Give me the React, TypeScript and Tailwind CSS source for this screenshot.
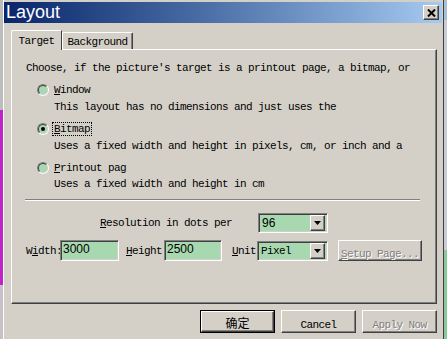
import type { ReactNode } from "react";

const mono = "font-['Liberation_Mono','DejaVu_Sans_Mono',monospace] text-[11px] tracking-[-0.6px] leading-[12px]";
const sans = "font-['Liberation_Sans',Arial,sans-serif]";

const raised = "border border-t-white border-l-white border-b-[#404040] border-r-[#404040] shadow-[inset_-1px_-1px_0_#808080]";
const sunken = "border border-t-[#808080] border-l-[#808080] border-b-white border-r-white shadow-[inset_1px_1px_0_#404040,inset_-1px_-1px_0_#d4d0c8]";
const disabledText = "text-[#808080] [text-shadow:1px_1px_0_#ffffff]";

function Radio({ checked }: { checked?: boolean }) {
  return (
    <div className="w-[12px] h-[12px] shrink-0 rounded-full border border-t-[#808080] border-l-[#808080] border-b-white border-r-white">
      <div className="w-full h-full rounded-full border border-t-[#404040] border-l-[#404040] border-b-[#d4d0c8] border-r-[#d4d0c8] bg-[#a8d8b0] flex items-center justify-center">
        {checked && <div className="w-[4px] h-[4px] rounded-full bg-black" />}
      </div>
    </div>
  );
}

function Arrow() {
  return (
    <div className={`w-[15px] h-[16px] bg-[#d4d0c8] flex items-center justify-center ${raised}`}>
      <svg width="7" height="4" viewBox="0 0 7 4">
        <path d="M0 0h7L3.5 4z" fill="#000" />
      </svg>
    </div>
  );
}

function Combo({ value, w, monoText }: { value: string; w: string; monoText?: boolean }) {
  return (
    <div className={`${w} h-[20px] bg-[#a8d8b0] flex items-center justify-between pl-[3px] pr-[2px] ${sunken}`}>
      <span className={monoText ? mono : `${sans} text-[12px] leading-[14px]`}>{value}</span>
      <Arrow />
    </div>
  );
}

function Field({ value, w }: { value: string; w: string }) {
  return (
    <div className={`${w} h-[21px] bg-[#a8d8b0] flex items-center pl-[2px] pb-[3px] ${sunken}`}>
      <span className={`${sans} text-[12px] leading-[14px]`}>{value}</span>
    </div>
  );
}

function Btn({ children, w, h, def, disabled }: { children: ReactNode; w: string; h: string; def?: boolean; disabled?: boolean }) {
  const inner = (
    <div className={`w-full h-full bg-[#d4d0c8] flex items-center justify-center ${raised}`}>
      <span className={disabled ? disabledText : ""}>{children}</span>
    </div>
  );
  return def ? <div className={`${w} ${h} border border-black`}>{inner}</div> : <div className={`${w} ${h}`}>{inner}</div>;
}

export default function App() {
  return (
    <div className="w-[447px] h-[339px] flex overflow-hidden bg-[#d4d0c8] text-black">
      <div className="w-[3px] flex flex-col">
        <div className="h-[110px] bg-[#bcbcbc]" />
        <div className="h-[175px] bg-[#c024c8]" />
        <div className="flex-1 bg-[#c8c0c8]" />
      </div>

      <div className="w-[441px] flex flex-col bg-[#d4d0c8] border-l border-r border-l-white border-r-[#404040] pt-[2px] pr-[1px]">
        <div className="h-[21px] flex items-start justify-between bg-gradient-to-r from-[#0a246a] to-[#a6caf0]">
          <span className={`${sans} text-[18px] leading-[21px] text-white pl-[2px]`}>Layout</span>
          <div className={`w-[16px] h-[15px] mt-[3px] mr-[3px] bg-[#d4d0c8] flex items-center justify-center ${raised}`}>
            <svg width="9" height="8" viewBox="0 0 9 8">
              <path d="M1 0.5l7 7M8 0.5l-7 7" stroke="#000" strokeWidth="2" />
            </svg>
          </div>
        </div>

        <div className="ml-[7px] mr-[5px] mt-[7px] flex flex-col">
          <div className="flex items-end h-[19px]">
            <div className={`relative z-10 -mb-px h-[20px] w-[51px] bg-[#d4d0c8] border-t border-l border-r border-t-white border-l-white border-r-[#404040] rounded-tl-[2px] flex items-center justify-center ${mono}`}>
              Target
            </div>
            <div className={`h-[17px] w-[71px] border-t border-l border-r border-t-white border-l-white border-r-[#404040] rounded-tr-[2px] shadow-[inset_-1px_0_0_#808080] flex items-center justify-center pt-px ${mono}`}>
              Background
            </div>
          </div>

          <div className="h-[255px] flex flex-col pl-[14px] border border-t-white border-l-white border-b-[#404040] border-r-[#404040] shadow-[inset_-1px_-1px_0_#808080]">
            <div className={`mt-[12px] h-[12px] whitespace-nowrap ${mono}`}>Choose, if the picture's target is a printout page, a bitmap, or</div>

            <div className="flex items-center h-[14px] ml-[11px] mt-[9px]">
              <Radio />
              <span className={`ml-[3px] px-px h-[14px] border border-transparent ${mono}`}>
                <u>W</u>indow
              </span>
            </div>
            <div className={`ml-[28px] mt-[4px] h-[12px] ${mono}`}>This layout has no dimensions and just uses the</div>

            <div className="flex items-center h-[14px] ml-[11px] mt-[9px]">
              <Radio checked />
              <span className={`ml-[3px] px-px h-[14px] border border-dotted border-black ${mono}`}>
                <u>B</u>itmap
              </span>
            </div>
            <div className={`ml-[28px] mt-[4px] h-[12px] whitespace-nowrap ${mono}`}>Uses a fixed width and height in pixels, cm, or inch and a</div>

            <div className="flex items-center h-[14px] ml-[11px] mt-[9px]">
              <Radio />
              <span className={`ml-[3px] px-px h-[14px] border border-transparent ${mono}`}>
                <u>P</u>rintout pag
              </span>
            </div>
            <div className={`ml-[28px] mt-[3px] h-[12px] ${mono}`}>Uses a fixed width and height in cm</div>

            <div className="mt-[9px] ml-[-1px] w-[395px] h-[2px] border-t border-b border-t-[#808080] border-b-white" />

            <div className="mt-[12px] h-[20px] flex items-center">
              <span className={`ml-[74px] w-[158px] ${mono}`}>
                <u>R</u>esolution in dots per
              </span>
              <Combo value="96" w="w-[70px]" />
            </div>

            <div className="mt-[7px] h-[21px] flex items-center">
              <span className={`w-[34px] whitespace-nowrap ${mono}`}>
                W<u>i</u>dth:
              </span>
              <Field value="3000" w="w-[59px]" />
              <span className={`ml-[7px] w-[38px] ${mono}`}>
                <u>H</u>eight
              </span>
              <Field value="2500" w="w-[58px]" />
              <span className={`ml-[10px] w-[25px] ${mono}`}>
                <u>U</u>nit
              </span>
              <Combo value="Pixel" w="w-[71px]" monoText />
              <div className="ml-[10px]">
                <Btn w="w-[84px]" h="h-[21px]" disabled>
                  <span className={mono}>
                    <u>S</u>etup Page...
                  </span>
                </Btn>
              </div>
            </div>
          </div>

          <div className="mt-[6px] flex justify-end gap-[6px]">
            <Btn w="w-[75px]" h="h-[23px]" def>
              <span className="font-['Noto_Sans_CJK_SC',sans-serif] text-[12px] leading-[14px]">确定</span>
            </Btn>
            <Btn w="w-[75px]" h="h-[23px]">
              <span className={mono}>Cancel</span>
            </Btn>
            <Btn w="w-[75px]" h="h-[23px]" disabled>
              <span className={mono}>Apply Now</span>
            </Btn>
          </div>
        </div>
      </div>

      <div className="w-[3px] flex flex-col">
        <div className="h-[20px] bg-[#a6c0dc]" />
        <div className="h-[230px] bg-[#c8ccd4]" />
        <div className="flex-1 bg-[#8cc89c]" />
      </div>
    </div>
  );
}
